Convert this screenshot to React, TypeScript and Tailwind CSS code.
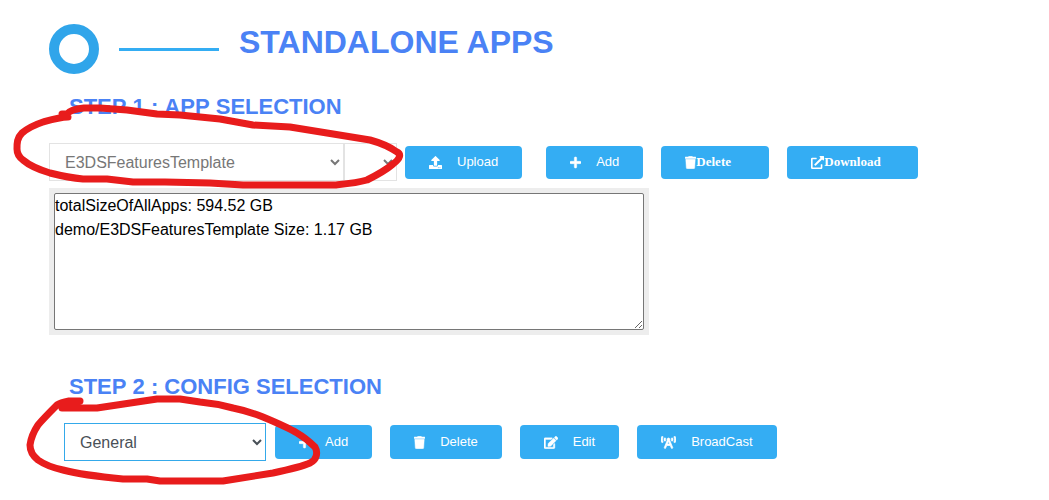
import React, { useState } from "react";
import {
  FaUpload,
  FaPlus,
  FaTrash,
  FaEdit,
  FaBroadcastTower,
  FaExternalLinkAlt,
} from "react-icons/fa";

type ActionButtonProps = {
  icon: React.ReactNode;
  label: string;
  className?: string;
};

const ActionButton = ({ icon, label, className = "" }: ActionButtonProps) => (
  <button
    type="button"
    className={`flex items-center gap-[15px] rounded bg-[#34adf3] px-6 text-[13px] leading-4 text-white ${className}`}
  >
    {icon}
    {label}
  </button>
);

const StepTitle = ({ children }: { children: React.ReactNode }) => (
  <h2 className="ml-5 text-[22px] leading-6 font-bold text-[#4a82f5] [font-kerning:none]">
    {children}
  </h2>
);

// Hand-drawn circles around the two pickers
const Markings = () => (
  <svg
    className="pointer-events-none absolute top-0 left-0"
    width="1049"
    height="500"
    viewBox="0 0 1049 500"
    fill="none"
    stroke="#e81c1c"
    strokeWidth="7"
    strokeLinecap="round"
    strokeLinejoin="round"
    aria-hidden="true"
  >
    <path d="M68 117C60 117 50 120 43 122C34 125 28 128 22 133C17 138 17 143 17 149C17 154 19 157 23 160C30 166 40 170 50 173C62 176 72 178 83 179H107L133 182H165L210 183L243 185H335C345 184 357 183 367 180C377 175 386 170 393 164C401 158 401 154 397 152C390 147 381 143 370 140L327 133L290 127L253 125L220 119L180 115L157 114L127 110L100 108H84C75 109 69 111 67 114H62" />
    <path d="M80 401H69C64 402 60 403 57 405C50 412 43 419 38 425C34 431 31 438 30 445C30 452 33 456 38 460C45 465 54 468 63 470C82 475 102 477 123 479H147L160 481H223L273 473C287 470 301 467 310 463C317 460 318 452 315 447C310 442 304 437 297 433C287 427 275 422 263 417C253 413 243 410 233 408C222 405 211 403 200 402L180 399H157L117 405L97 408H62L72 402" />
  </svg>
);

const App = () => {
  const [log, setLog] = useState(
    "totalSizeOfAllApps: 594.52 GB\ndemo/E3DSFeaturesTemplate Size: 1.17 GB"
  );

  return (
    <div className="relative min-h-screen overflow-hidden bg-white font-['Liberation_Sans',Arial,sans-serif]">
      <main className="px-[49px] pt-6 pb-10">
        <header className="flex items-start gap-5">
          <div className="size-[50px] rounded-full border-10 border-[#30a5ea]" />
          <div className="h-[3px] w-[100px] self-center bg-[#34adf3]" />
          <h1 className="text-[32px] leading-9 font-bold text-[#4a82f5]">
            STANDALONE APPS
          </h1>
        </header>

        {/* App selection */}
        <section className="mt-[21px]">
          <StepTitle>STEP 1 : APP SELECTION</StepTitle>
          <div className="mt-6 flex items-center">
            <select
              aria-label="App"
              className="h-[38px] w-[295px] border border-[#e3e3e3] bg-white pl-[11px] text-base text-[#777777]"
            >
              <option>E3DSFeaturesTemplate</option>
            </select>
            <select
              aria-label="Version"
              className="h-[38px] w-[53px] border border-[#e3e3e3] bg-white text-base text-[#777777]"
            />
            <ActionButton
              className="ml-2 h-[33px]"
              icon={<FaUpload className="h-[13px] w-[13px]" />}
              label="Upload"
            />
            <ActionButton
              className="ml-6 h-[33px]"
              icon={<FaPlus className="h-[13px] w-[11px]" strokeWidth={20} />}
              label="Add"
            />
            <button
              type="button"
              className="ml-[18px] flex h-[33px] w-[108px] items-center rounded bg-[#34adf3] pl-6 font-['Liberation_Serif',serif] text-[13px] font-bold text-white"
            >
              <FaTrash className="h-[13px] w-[11px]" strokeWidth={20} />
              Delete
            </button>
            <button
              type="button"
              className="ml-[18px] flex h-[33px] w-[131px] items-center rounded bg-[#34adf3] pl-6 font-['Liberation_Serif',serif] text-[13px] font-bold text-white"
            >
              <FaExternalLinkAlt className="h-[13px] w-[13px]" />
              Download
            </button>
          </div>
          <div className="mt-[7px] max-w-[600px] bg-[#ededed] p-[5px]">
            <textarea
              aria-label="App sizes"
              value={log}
              onChange={(e) => setLog(e.target.value)}
              className="block h-[137px] w-full rounded-xs border border-[#767676] bg-white text-base leading-6 text-black"
            />
          </div>
        </section>

        {/* Config selection */}
        <section className="mt-10">
          <StepTitle>STEP 2 : CONFIG SELECTION</StepTitle>
          <div className="mt-6 ml-[15px] flex items-center">
            <select
              aria-label="Config"
              className="mr-[9px] h-[38px] w-[202px] border border-[#34a9ea] bg-white pl-[11px] text-base text-[#495057]"
            >
              <option>General</option>
            </select>
            <div className="flex gap-[18px]">
              <ActionButton
                className="h-[34px]"
                icon={<FaPlus className="h-[13px] w-[11px]" strokeWidth={20} />}
                label="Add"
              />
              <ActionButton
                className="h-[34px]"
                icon={<FaTrash className="h-[13px] w-[11px]" strokeWidth={20} />}
                label="Delete"
              />
              <ActionButton
                className="h-[34px]"
                icon={<FaEdit className="h-[13px] w-[14px]" strokeWidth={16} />}
                label="Edit"
              />
              <ActionButton
                className="h-[34px]"
                icon={
                  <FaBroadcastTower
                    className="h-[13px] w-[15px]"
                    strokeWidth={30}
                  />
                }
                label="BroadCast"
              />
            </div>
          </div>
        </section>
      </main>
      <Markings />
    </div>
  );
};

export default App;
